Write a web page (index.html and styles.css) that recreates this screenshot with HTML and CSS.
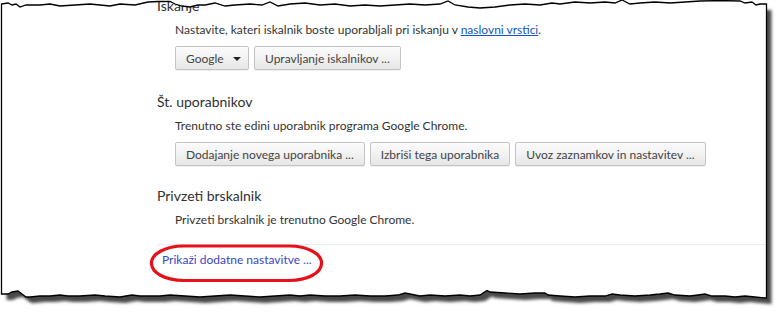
FILE: index.html
```html
<!DOCTYPE html>
<html lang="sl">
<head>
<meta charset="utf-8">
<title>Nastavitve</title>
<link rel="stylesheet" href="styles.css">
</head>
<body>
<div class="page">
  <section class="sec sec-first">
    <h3 class="sec-title">Iskanje</h3>
    <div class="sec-body">
      <p class="desc">Nastavite, kateri iskalnik boste uporabljali pri iskanju v <a class="inline-link" href="#">naslovni vrstici</a>.</p>
      <div class="btns">
        <button class="btn select">Google<span class="arrow"></span></button>
        <button class="btn">Upravljanje iskalnikov ...</button>
      </div>
    </div>
  </section>

  <section class="sec sec-users">
    <h3 class="sec-title">Št. uporabnikov</h3>
    <div class="sec-body">
      <p class="desc">Trenutno ste edini uporabnik programa Google Chrome.</p>
      <div class="btns">
        <button class="btn">Dodajanje novega uporabnika ...</button>
        <button class="btn">Izbriši tega uporabnika</button>
        <button class="btn">Uvoz zaznamkov in nastavitev ...</button>
      </div>
    </div>
  </section>

  <section class="sec sec-default">
    <h3 class="sec-title">Privzeti brskalnik</h3>
    <div class="sec-body">
      <p class="desc desc-default">Privzeti brskalnik je trenutno Google Chrome.</p>
    </div>
  </section>

  <div class="separator"></div>
  <a class="more-link" href="#">Prikaži dodatne nastavitve ...</a>
</div>

<svg class="frame" width="783" height="315" viewBox="0 0 783 315" aria-hidden="true">
  <defs>
    <path id="paper" d="M1.5,4 L8,3 L12,5 L16,4 L20,7 L26,5 L40,5 L50,4 L60,6 L75,5 L90,4 L100,5 L110,6 L120,4 L135,5 L148,2 L158,1.5 L170,1.5 L175,4 L182,6 L190,7 L198,5 L205,5 L215,3 L225,6 L235,5 L250,4 L262,5 L270,2 L278,6 L290,4 L305,3 L320,5 L335,4 L350,6 L365,5 L380,6 L395,5 L410,4 L425,5 L440,4 L448,1 L455,5 L468,7 L480,8 L495,7 L510,5 L525,4 L540,5 L552,3 L560,4 L575,2 L590,3 L605,2 L615,3 L622,0 L630,4 L640,3 L655,2 L670,3 L685,2 L700,1 L720,0.5 L740,1 L745,3 L752,2 L756,5 L760,4 L766.5,4 L766.5,298 L755,297 L745,296 L735,297 L725,296 L712,296 L705,294 L698,295 L690,296 L675,295 L668,293 L660,294 L650,295 L635,296 L620,295 L612,294 L605,296 L590,296 L575,297 L560,296 L548,295 L545,293 L535,293 L520,294 L505,293 L490,292 L487,290.5 L480,295 L470,296 L460,295 L445,296 L430,295 L420,296 L410,294 L405,293 L398,295 L385,296 L370,296 L355,295 L340,296 L325,296 L310,295 L300,296 L290,295 L275,296 L260,297 L245,296 L230,295 L215,296 L200,297 L185,296 L170,295 L160,296 L140,296 L132,295 L120,297 L105,296 L95,295 L80,296 L68,296 L60,295 L50,296 L40,296 L30,297 L26,297 L22,294 L18,291 L12,292 L8,294 L1.5,294 Z"/>
    <mask id="outside" maskUnits="userSpaceOnUse" x="0" y="0" width="783" height="315">
      <rect width="783" height="315" fill="#fff"/>
      <use href="#paper" fill="#000"/>
    </mask>
    <filter id="soft" x="-5%" y="-5%" width="110%" height="110%">
      <feGaussianBlur stdDeviation="1.6"/>
    </filter>
  </defs>
  <g mask="url(#outside)">
    <rect width="783" height="315" fill="#fff"/>
    <use href="#paper" fill="#4a4a4a" transform="translate(5,6)" filter="url(#soft)"/>
  </g>
  <use href="#paper" fill="none" stroke="#000" stroke-width="1.3"/>
  <rect x="151.5" y="246" width="170" height="34.5" rx="32" ry="17" fill="none" stroke="#e5101a" stroke-width="3.2"/>
</svg>
</body>
</html>
```
FILE: styles.css
```css
html, body {
  margin: 0;
  padding: 0;
  background: #fff;
}

body {
  position: relative;
  width: 783px;
  height: 315px;
  overflow: hidden;
  font-family: Lato, "Open Sans", sans-serif;
  font-size: 12px;
  color: #333;
}

.page {
  padding: 0 17px 0 157px;
}

.sec {
  margin: 0;
}

.sec-first {
  margin-top: -3px;
  margin-bottom: 23px;
}

.sec-users {
  margin-bottom: 21px;
}

.sec-title {
  margin: 0 0 7px;
  font-size: 14px;
  font-weight: normal;
  line-height: 18px;
  color: #303030;
}

.sec-body {
  padding-left: 18px;
}

.desc {
  margin: 0;
  line-height: 16px;
  white-space: nowrap;
}

.desc-default {
  margin-top: 3px;
}

.inline-link {
  color: #1155cc;
  text-decoration: underline;
}

.btns {
  display: flex;
  gap: 5px;
  margin-top: 8px;
}

.btn {
  box-sizing: border-box;
  height: 24px;
  padding: 0 10px;
  display: flex;
  align-items: center;
  font-family: Lato, "Open Sans", sans-serif;
  font-size: 12px;
  color: #444;
  background: linear-gradient(#fbfbfb, #f3f3f3 45%, #e6e6e6);
  border: 1px solid #c3c3c3;
  border-radius: 2px;
  box-shadow: 0 1px 0 rgba(0, 0, 0, 0.06), inset 0 1px 1px rgba(255, 255, 255, 0.8);
  white-space: nowrap;
}

.select {
  width: 74px;
  padding: 0 7px 0 10px;
  justify-content: space-between;
}

.arrow {
  width: 0;
  height: 0;
  border-left: 4px solid transparent;
  border-right: 4px solid transparent;
  border-top: 4px solid #222;
  margin-top: 1px;
}

.separator {
  margin-top: 16px;
  height: 1px;
  background: #ebebeb;
}

.more-link {
  display: inline-block;
  margin: 7px 0 0 5px;
  line-height: 16px;
  color: #3a45c8;
  text-decoration: none;
}

.frame {
  position: absolute;
  left: 0;
  top: 0;
  z-index: 2;
  pointer-events: none;
}
```
